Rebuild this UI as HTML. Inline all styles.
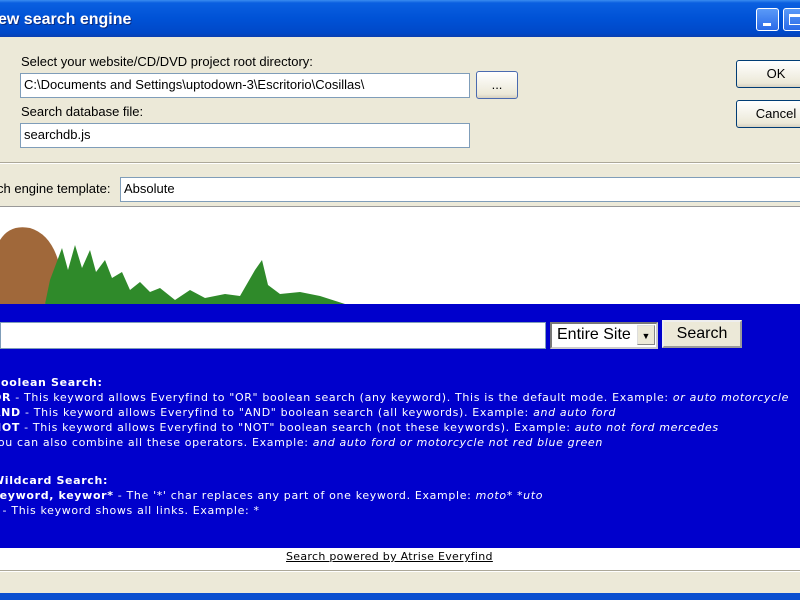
<!DOCTYPE html>
<html><head><style>
*{margin:0;padding:0;box-sizing:border-box}
body{width:800px;height:600px;overflow:hidden;background:#ece9d8;font-family:"Liberation Sans",Arial,sans-serif;font-size:13px;position:relative;color:#000}
.abs{position:absolute}
.title{left:0;top:0;width:800px;height:37px;background:linear-gradient(#3a8cf0 0,#0a5fe0 8%,#0052d6 50%,#0048c8 90%,#0a3fb0 100%);}
.title span{position:absolute;left:-2px;top:11px;color:#fff;font-weight:bold;font-size:16px;text-shadow:1px 1px #0a2a80}
.tb{top:8px;width:23px;height:23px;border:1px solid #fff;border-radius:3px;background:linear-gradient(#5a9af8,#2a6ae8)}
.inp{background:#fff;border:1px solid #7f9db9;padding-left:3px;font-size:13px;line-height:22px}
.btn{border:1px solid #003c74;border-radius:3px;background:linear-gradient(#fff,#ece9d8 85%,#d6d0c0);text-align:center;font-size:13px}
.txt{font-family:"DejaVu Sans",Verdana,sans-serif;font-size:11px;color:#fff;line-height:15px;white-space:nowrap;letter-spacing:0.65px}
.txt i{font-style:italic}
</style></head><body>
<div class="abs title"><span>ew search engine</span>
<div class="abs tb" style="left:756px"><div class="abs" style="left:6px;top:14px;width:8px;height:3px;background:#fff"></div></div>
<div class="abs tb" style="left:783px;width:25px"><div class="abs" style="left:5px;top:5px;width:12px;height:11px;border:1px solid #fff;border-top-width:3px"></div></div>
</div>
<div class="abs" style="left:21px;top:54px">Select your website/CD/DVD project root directory:</div>
<div class="abs inp" style="left:20px;top:73px;width:450px;height:25px">C:\Documents and Settings\uptodown-3\Escritorio\Cosillas\</div>
<div class="abs btn" style="left:476px;top:71px;width:42px;height:28px;line-height:26px;border-color:#4a6ab0">...</div>
<div class="abs" style="left:21px;top:104px">Search database file:</div>
<div class="abs inp" style="left:20px;top:123px;width:450px;height:25px">searchdb.js</div>
<div class="abs btn" style="left:736px;top:60px;width:80px;height:28px;line-height:26px">OK</div>
<div class="abs btn" style="left:736px;top:100px;width:80px;height:28px;line-height:26px">Cancel</div>
<div class="abs" style="left:0;top:162px;width:800px;height:2px;border-top:1px solid #aca899;border-bottom:1px solid #fff"></div>
<div class="abs" style="left:-3px;top:181px">ch engine template:</div>
<div class="abs inp" style="left:120px;top:177px;width:690px;height:25px">Absolute</div>
<div class="abs" style="left:0;top:206px;width:800px;height:98px;background:#fff;border-top:1px solid #999"></div>
<svg class="abs" style="left:0;top:220px" width="350" height="85">
<path d="M0 20 Q10 4 30 8 Q50 14 58 40 L56 60 L45 84 L0 84Z" fill="#a0683a"/>
<path d="M45 84 L50 60 L62 28 L68 50 L75 25 L82 48 L90 30 L96 52 L105 40 L112 58 L122 52 L130 70 L140 62 L150 72 L160 68 L175 80 L190 70 L205 78 L225 74 L240 76 L255 50 L262 40 L268 65 L280 74 L300 72 L320 76 L345 84Z" fill="#2f8a2a"/>
</svg>
<div class="abs" style="left:0;top:304px;width:800px;height:244px;background:#0000cc"></div>
<div class="abs" style="left:0;top:322px;width:546px;height:27px;background:#fff;border:1px solid #7f9db9"></div>
<div class="abs" style="left:550px;top:322px;width:108px;height:27px;background:#fff;border:2px inset #ccc;font-size:16px;line-height:22px;padding-left:5px">Entire Site<div class="abs" style="right:1px;top:1px;width:18px;height:20px;background:#ece9d8;border:1px outset #ddd;font-size:9px;text-align:center;line-height:20px">▼</div></div>
<div class="abs" style="left:662px;top:320px;width:80px;height:28px;background:#ece9d8;border:2px outset #eee;font-size:16px;line-height:24px;text-align:center">Search</div>
<div class="abs txt" style="left:-8px;top:375px">
<b>Boolean Search:</b><br>
<b>OR</b> - This keyword allows Everyfind to "OR" boolean search (any keyword). This is the default mode. Example: <i>or auto motorcycle</i><br>
<b>AND</b> - This keyword allows Everyfind to "AND" boolean search (all keywords). Example: <i>and auto ford</i><br>
<b>NOT</b> - This keyword allows Everyfind to "NOT" boolean search (not these keywords). Example: <i>auto not ford mercedes</i><br>
You can also combine all these operators. Example: <i>and auto ford or motorcycle not red blue green</i>
</div>
<div class="abs txt" style="left:-8px;top:473px">
<b>Wildcard Search:</b><br>
<b>keyword, keywor*</b> - The '*' char replaces any part of one keyword. Example: <i>moto* *uto</i><br>
<b>*</b> - This keyword shows all links. Example: *
</div>
<div class="abs" style="left:0;top:548px;width:800px;height:22px;background:#fff"></div>
<div class="abs txt" style="left:286px;top:549px;color:#000;text-decoration:underline;letter-spacing:0.3px">Search powered by Atrise Everyfind</div>
<div class="abs" style="left:0;top:570px;width:800px;height:2px;border-top:1px solid #aca899;border-bottom:1px solid #fff"></div>
<div class="abs" style="left:0;top:593px;width:800px;height:7px;background:#0a4fd0"></div>
</body></html>
